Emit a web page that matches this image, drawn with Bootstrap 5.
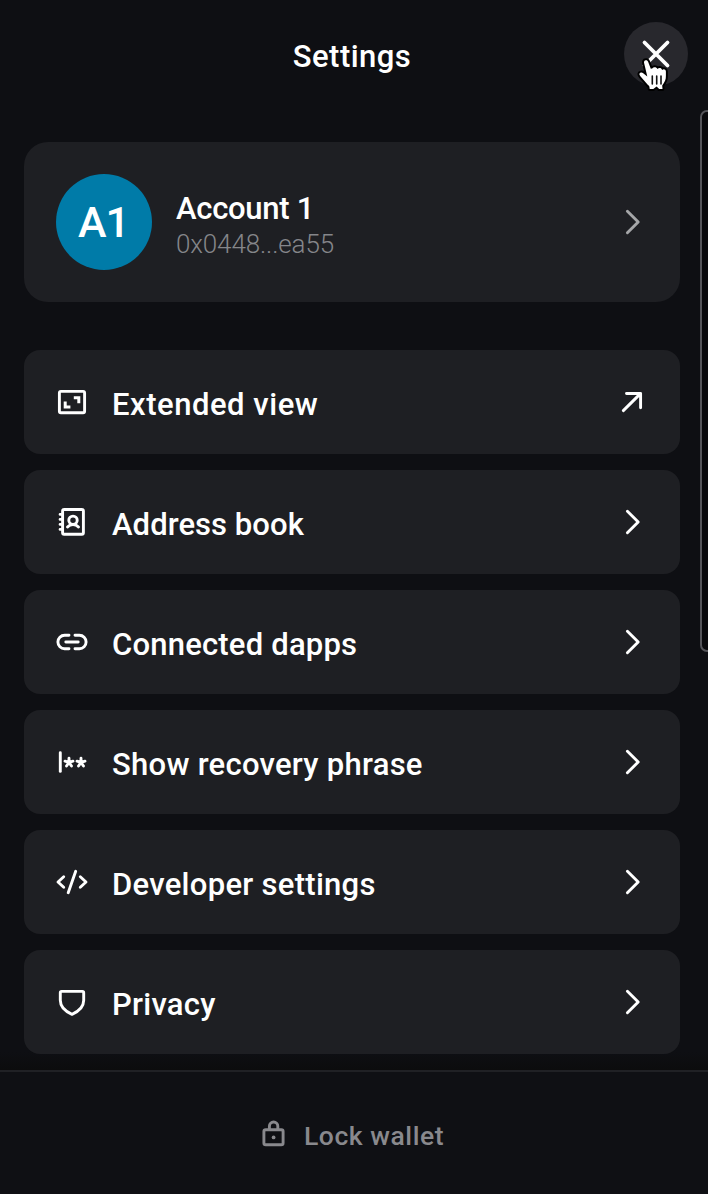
<!DOCTYPE html>
<html lang="en" data-bs-theme="dark">
<head>
<meta charset="utf-8">
<meta name="viewport" content="width=device-width, initial-scale=1">
<title>Settings</title>
<link href="https://cdn.jsdelivr.net/npm/bootstrap@5.3.0/dist/css/bootstrap.min.css" rel="stylesheet">
<style>
body{background:#0e0f13;color:#fff;font-family:Roboto,"Liberation Sans",sans-serif;font-weight:500;height:1194px;overflow:hidden}
svg{fill:none;stroke:currentColor;stroke-width:2.9;stroke-linecap:round;stroke-linejoin:round;flex-shrink:0;display:block;overflow:visible}
.topbar{height:110px;padding:22px 20px 0}
.heading{font-size:31px;line-height:64px;font-weight:500;padding-top:3px;padding-left:60px;letter-spacing:.45px}
.close-btn{width:64px;height:64px;background:#28282d;border:0;color:#fff}
.pointer{left:13px;top:35px}
.main-area{height:960px;padding:32px 28px 0 24px;background:linear-gradient(#0e0f13,#0c0c0d) bottom/100% 18px no-repeat}
.panel{background:#1e1f23;color:#fff;border:0;width:100%;text-align:left;font-weight:500}
.account{height:160px;border-radius:24px;padding:0 32px;margin-bottom:48px}
.avatar{width:96px;height:96px;background:#007ba8;font-size:43px;letter-spacing:-1px;padding-right:1px;padding-top:1px}
.acct-name{font-size:31px;line-height:34px;letter-spacing:-.3px}
.acct-addr{font-size:26px;line-height:36px;font-weight:300;color:#85868a;letter-spacing:-.13px}
.acct-text{padding-top:9px}
.menu-row{height:104px;border-radius:16px;padding:0 32px}
.menu-label{font-size:31px;line-height:40px;padding-top:5px;letter-spacing:var(--ls,.2px);white-space:nowrap}
.muted-icon{color:#a5a6a8}
.lockbar{height:124px;border-top:2px solid #202125;background:#0f1014;color:#89898d;padding:2px 4px 0 0}
.lock-label{font-size:26.5px;letter-spacing:.55px;padding-top:4px}
.side-frame{left:700px;top:110px;width:30px;height:542px;border:2px solid #545459;border-radius:7px;background:#09090c}
.ls-extended{--ls:.53px}.ls-address{--ls:.06px}.ls-connected{--ls:.2px}.ls-show{--ls:.27px}.ls-dev{--ls:.29px}.ls-privacy{--ls:.25px}
</style>
</head>
<body class="position-relative">
<svg class="d-none"><defs>
<symbol id="chevron" viewBox="0 0 32 32"><path d="M11.4 5.3 22.2 16 11.4 26.8"/></symbol>
<symbol id="star" viewBox="0 0 12 12"><path d="M6 6.400V2.200M6 6.400l4-1.200M6 6.400l2.500 3.600M6 6.400 3.500 10M6 6.400 2 5.200"/></symbol>
</defs></svg>

<header class="topbar d-flex align-items-start">
  <h1 class="heading flex-grow-1 text-center mb-0">Settings</h1>
  <button class="close-btn rounded-circle position-relative p-0" aria-label="Close">
    <svg width="64" height="64" viewBox="0 0 64 64"><path style="stroke-width:3.8" d="M20.5 20.5 43.5 43.5M43.5 20.5 20.5 43.5"/></svg>
    <svg class="pointer position-absolute" width="34" height="36" viewBox="0 0 34 36"><path d="M8.7 3.3C7.3 3.5 6.8 4.6 7.1 6L10.3 19.5 6.2 16.2C4.8 15.1 2.6 15.5 2.4 17.1 2.3 18 3 18.8 3.8 19.7L10.5 27.5C11.2 28.5 12.2 28.5 12.4 29.8L12.7 32H16.3L19.6 29.5 22.2 32H25.5L25.2 28.5C27.8 25 29 22.5 28.9 19V14.5C28.8 12.3 26.5 11.8 25.2 13 24.5 10.5 21.7 10.4 20.5 12 19.4 9.8 16.5 9.9 15.2 11.6L13.8 11.7 11.2 5C10.7 3.7 9.9 3.1 8.7 3.3Z" style="fill:#fff;stroke:#000;stroke-width:4;paint-order:stroke"/><path d="M15.3 19v8M19.7 19v8M24 19v8" style="stroke:#111;stroke-width:1.6"/></svg>
  </button>
</header>

<main class="main-area">
  <button class="panel account d-flex align-items-center">
    <span class="avatar rounded-circle d-flex align-items-center justify-content-center">A1</span>
    <span class="acct-text d-flex flex-column flex-grow-1 ms-4"><span class="acct-name">Account 1</span><span class="acct-addr">0x0448...ea55</span></span>
    <svg class="muted-icon" width="32" height="32"><use href="#chevron"/></svg>
  </button>
  <nav class="d-flex flex-column gap-3">
    <button class="panel menu-row d-flex align-items-center gap-4">
      <svg width="32" height="32" viewBox="0 0 32 32"><rect x="3.4" y="5.4" width="25.2" height="21.3" rx="1.5"/><path style="stroke-width:3;stroke-linejoin:miter;stroke-linecap:butt" d="M17.8 11.8h5v5.4M9.2 15.5v5.4h5.2"/></svg>
      <span class="menu-label ls-extended flex-grow-1">Extended view</span>
      <svg width="32" height="32" viewBox="0 0 32 32"><path d="M10.5 7.5H24.6V21.8M24.2 7.9 7.3 24.6"/></svg>
    </button>
    <button class="panel menu-row d-flex align-items-center gap-4">
      <svg width="32" height="32" viewBox="0 0 32 32"><rect x="6.6" y="3.5" width="20.8" height="24.8" rx="1.5"/><path d="M4.1 8.4h2M4.1 13.4h2M4.1 18.4h2M4.1 23.4h2"/><circle cx="17" cy="14.3" r="4.2"/><path d="M11.5 20.9c3-3.1 8-3.1 11 0"/></svg>
      <span class="menu-label ls-address flex-grow-1">Address book</span>
      <svg width="32" height="32"><use href="#chevron"/></svg>
    </button>
    <button class="panel menu-row d-flex align-items-center gap-4">
      <svg width="32" height="32" viewBox="0 0 32 32"><path d="M13 9.3H8.6a6.7 6.7 0 0 0 0 13.4H13M19 9.3h4.4a6.7 6.7 0 0 1 0 13.4H19M9.8 16h12.4"/></svg>
      <span class="menu-label ls-connected flex-grow-1">Connected dapps</span>
      <svg width="32" height="32"><use href="#chevron"/></svg>
    </button>
    <button class="panel menu-row d-flex align-items-center gap-4">
      <svg width="32" height="32" viewBox="0 0 32 32"><path d="M4.3 6.8v18.6"/><use href="#star" x="7" y="10" width="12" height="12"/><use href="#star" x="19" y="10" width="12" height="12"/></svg>
      <span class="menu-label ls-show flex-grow-1">Show recovery phrase</span>
      <svg width="32" height="32"><use href="#chevron"/></svg>
    </button>
    <button class="panel menu-row d-flex align-items-center gap-4">
      <svg width="32" height="32" viewBox="0 0 32 32"><path d="M7.7 10.7 2 16l5.7 5.3M24.3 10.7 30 16l-5.7 5.3M19.7 5.3 12.2 26.7"/></svg>
      <span class="menu-label ls-dev flex-grow-1">Developer settings</span>
      <svg width="32" height="32"><use href="#chevron"/></svg>
    </button>
    <button class="panel menu-row d-flex align-items-center gap-4">
      <svg width="32" height="32" viewBox="0 0 32 32"><path d="M5.6 5.4h20.8q1.3 0 1.3 1.3v7.600c0 6.200-4.400 10.900-11.700 14C8.700 25.200 4.300 20.500 4.300 14.300V6.700q0-1.300 1.300-1.300Z"/></svg>
      <span class="menu-label ls-privacy flex-grow-1">Privacy</span>
      <svg width="32" height="32"><use href="#chevron"/></svg>
    </button>
  </nav>
</main>
<footer class="lockbar d-flex align-items-center justify-content-center">
  <svg width="28" height="28" viewBox="0 0 28 28" class="me-3"><rect x="3.9" y="9.8" width="19.2" height="15" rx="1.8"/><path d="M9.4 9.500V6.200a4.200 4.200 0 0 1 8.400 0V9.500"/><circle cx="13.600" cy="17.400" r="1.900" style="fill:currentColor;stroke:none"/></svg>
  <span class="lock-label">Lock wallet</span>
</footer>
<aside class="side-frame position-absolute"></aside>
<script src="https://cdn.jsdelivr.net/npm/bootstrap@5.3.0/dist/js/bootstrap.bundle.min.js"></script>
</body>
</html>
